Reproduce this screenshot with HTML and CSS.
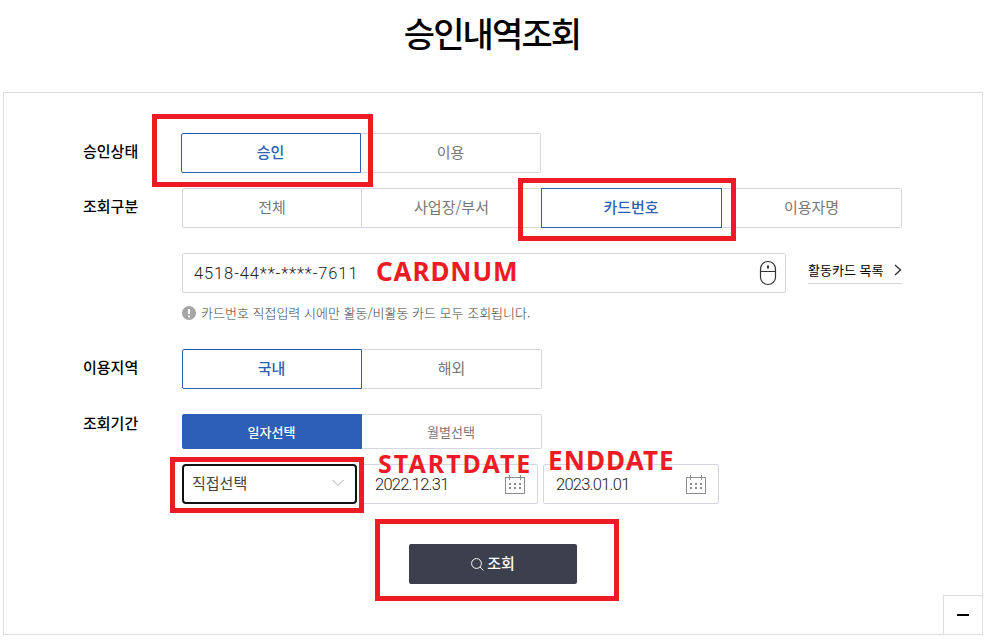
FILE: index.html
```html
<!DOCTYPE html>
<html lang="ko">
<head>
<meta charset="utf-8">
<title>승인내역조회</title>
<link rel="stylesheet" href="styles.css">
</head>
<body>
<h1 class="title">승인내역조회</h1>
<main class="panel">
  <div class="row row-status">
    <div class="label">승인상태</div>
    <div class="tabs"><button class="tab on">승인</button><button class="tab">이용</button></div>
  </div>
  <div class="row row-type">
    <div class="label">조회구분</div>
    <div class="tabs"><button class="tab">전체</button><button class="tab">사업장/부서</button><button class="tab on strong">카드번호</button><button class="tab">이용자명</button></div>
  </div>
  <div class="row row-card">
    <div class="field card"><span class="num">4518-44**-****-7611</span>
      <svg class="mouse" width="18" height="26" viewBox="0 0 18 26" fill="none" stroke="#333"><rect x="1.500" y="1.500" width="15" height="23" rx="7.500" stroke-width="1.200"/><path d="M1.500 11.500h15"/><path d="M9 5.500v3" stroke-width="2"/></svg>
    </div>
    <a class="list">활동카드 목록<svg width="8" height="12" viewBox="0 0 8 12" fill="none" stroke="#333" stroke-width="1.4"><path d="M1 1l5.500 5L1 11"/></svg></a>
  </div>
  <p class="hint"><svg width="14" height="14" viewBox="0 0 14 14"><circle cx="7" cy="7" r="7" fill="#a6a6a6"/><path d="M7 3v5M7 9.500v2" stroke="#fff" stroke-width="2"/></svg><span>카드번호 직접입력 시에만 활동/비활동 카드 모두 조회됩니다.</span></p>
  <div class="row row-area">
    <div class="label">이용지역</div>
    <div class="tabs"><button class="tab on">국내</button><button class="tab">해외</button></div>
  </div>
  <div class="row row-period">
    <div class="label">조회기간</div>
    <div class="tabs small"><button class="tab fill">일자선택</button><button class="tab">월별선택</button></div>
  </div>
  <div class="row row-dates">
    <div class="select"><span>직접선택</span><svg width="12" height="8" viewBox="0 0 12 8" fill="none" stroke="#aaa"><path d="M.5 1L6 6.500 11.500 1"/></svg></div>
    <div class="field date"><span>2022.12.31</span>
      <svg width="20" height="20" viewBox="0 0 20 20" fill="none" stroke="#8c8c8c"><rect x=".5" y="2.500" width="19" height="16"/><path d="M4.500 0v5M15.500 0v5"/><path d="M4 9h2M9 9h2M14 9h2M4 13h2M9 13h2M14 13h2" stroke-width="2"/></svg>
    </div>
    <div class="field date"><span>2023.01.01</span>
      <svg width="20" height="20" viewBox="0 0 20 20" fill="none" stroke="#8c8c8c"><rect x=".5" y="2.500" width="19" height="16"/><path d="M4.500 0v5M15.500 0v5"/><path d="M4 9h2M9 9h2M14 9h2M4 13h2M9 13h2M14 13h2" stroke-width="2"/></svg>
    </div>
  </div>
  <button class="search"><svg width="13" height="13" viewBox="0 0 13 13" fill="none" stroke="#fff"><circle cx="5.500" cy="5.500" r="4.900"/><path d="M9 9l3.500 3.500"/></svg><span>조회</span></button>
  <button class="fold"><i></i></button>
</main>
<div class="mark mark-status"></div>
<div class="mark mark-type"></div>
<div class="mark mark-select"></div>
<div class="mark mark-search"></div>
<div class="note note-card">CARDNUM</div>
<div class="note note-start">STARTDATE</div>
<div class="note note-end">ENDDATE</div>
</body>
</html>
```
FILE: styles.css
```css
* { box-sizing: border-box; }
body { margin: 0; width: 995px; height: 640px; overflow: hidden; position: relative; background: #fff; color: #000; font: 15px/20px "Noto Sans CJK KR", sans-serif; }
button { font: inherit; padding: 0; margin: 0; border: 0; background: none; }
svg { display: block; flex: none; }
.title { margin: 0; height: 92px; padding: 10px 11px 0 0; text-align: center; font-size: 34px; line-height: 46px; font-weight: 500; letter-spacing: -1.9px; }
.panel { position: relative; margin-left: 3px; width: 980px; height: 543px; border: 1px solid #ddd; padding: 40px 0 0 79px; }
.row { display: flex; }
.label { width: 99px; padding-top: 8px; font-weight: 500; }
.row-status { height: 55px; }
.row-status .label { width: 98px; }
.row-type { height: 65px; }
.tabs { display: flex; height: 40px; }
.tab { width: 180px; border: 1px solid #d6d6e3; border-left: 0; color: #777; padding: 0 0 2px 0; }
.tab:first-child { border-left: 1px solid #d6d6e3; border-radius: 2px 0 0 2px; }
.tab:last-child { border-radius: 0 2px 2px 0; }
.tab.on, .tab.on:first-child { border: 1px solid #2c5fb5; color: #2c5fb5; font-weight: 500; padding-right: 1px; }
.tab.strong { width: 181px; margin-left: -1px; }
.tab.fill, .tab.fill:first-child { border-color: #2c5fb5; background: #2c5fb5; color: #fff; font-weight: 500; }
.small { height: 35px; font-size: 13px; }
.small .tab { padding: 0 1px 0 0; }
.row-card { padding-left: 99px; height: 40px; }
.field { display: flex; align-items: center; justify-content: space-between; border: 1px solid #d6d6e3; border-radius: 2px; height: 40px; color: #333; }
.card { width: 604px; padding: 0 8px 0 11px; }
.num { padding-top: 1px; font: 300 16.500px/20px Roboto, sans-serif; letter-spacing: .88px; color: #222; }
.list { display: flex; align-items: center; justify-content: space-between; margin: 2px 0 0 22px; width: 94px; height: 29px; padding-top: 1px; border-bottom: 1px solid #d6d6e3; font-size: 13px; }
.hint { display: flex; align-items: center; gap: 5px; margin: 10px 0 0 99px; height: 20px; color: #444; font-size: 13px; font-weight: 300; }
.row-area { margin-top: 26px; height: 65px; }
.row-period { height: 50px; }
.row-period .label { padding-top: 0; margin-top: -1px; }
.row-dates { padding-left: 99px; }
.select { width: 175px; height: 40px; border: 2px solid #111; border-radius: 4px; display: flex; align-items: center; justify-content: space-between; padding: 0 11px 2px 8px; color: #444; }
.date { width: 176px; padding: 2px 12px 0 12px; margin-left: 5px; font: 300 16.500px/16px Roboto, sans-serif; letter-spacing: -.75px; color: #222; }
.search { display: flex; align-items: center; justify-content: center; gap: 3px; width: 168px; height: 40px; margin: 40px 0 0 326px; border-radius: 2px; background: #3c404d; color: #fff; font-weight: 500; }
.search span { padding-bottom: 2px; }
.fold { position: absolute; right: -1px; bottom: -1px; width: 40px; height: 40px; border: 1px solid #ddd; display: flex; align-items: center; justify-content: center; }
.fold i { width: 12px; height: 2px; background: #000; }
.mark { position: absolute; border: 5px solid #ed1c24; }
.mark-status { left: 152px; top: 114px; width: 221px; height: 73px; }
.mark-type { left: 518px; top: 178px; width: 218px; height: 63px; }
.mark-select { left: 170px; top: 457px; width: 194px; height: 56px; }
.mark-search { left: 375px; top: 519px; width: 244px; height: 82px; }
.note { position: absolute; font: 700 26px/20px "Noto Sans", sans-serif; color: #ed1c24; white-space: nowrap; }
.note-card { left: 376px; top: 261px; letter-spacing: .9px; }
.note-start { left: 378px; top: 453px; font-size: 25px; letter-spacing: 2px; }
.note-end { left: 548px; top: 450px; letter-spacing: 1.100px; }
```
